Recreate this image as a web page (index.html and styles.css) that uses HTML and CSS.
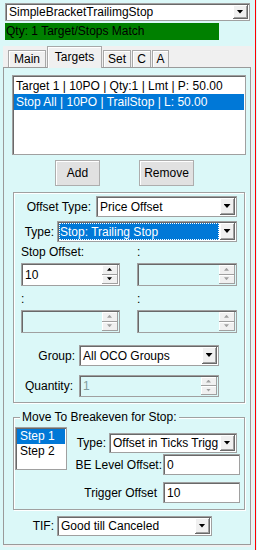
FILE: index.html
```html
<!DOCTYPE html>
<html lang="en">
<head>
  <meta charset="UTF-8">
  <title>Bracket Targets</title>
  <link rel="stylesheet" href="styles.css">
</head>
<body>
  <div class="form">
    <div class="combo top-combo"><span class="val">SimpleBracketTrailimgStop</span><span class="drop"></span></div>
    <div class="status">Qty: 1 Target/Stops Match</div>

    <div class="tabs">
      <div class="tab-strip">
        <span class="tab t-main">Main</span>
        <span class="tab t-targets active">Targets</span>
        <span class="tab t-set">Set</span>
        <span class="tab t-c">C</span>
        <span class="tab t-a">A</span>
      </div>

      <div class="page">
        <div class="listbox orders">
          <div class="item">Target 1 | 10PO | Qty:1 | Lmt | P: 50.00</div>
          <div class="item sel">Stop All | 10PO | TrailStop | L: 50.00</div>
        </div>

        <div class="btn-row">
          <button class="btn btn-add">Add</button>
          <button class="btn btn-remove">Remove</button>
        </div>

        <div class="group offsets">
          <div class="row r-otype">
            <span class="lbl">Offset Type:</span>
            <div class="combo"><span class="val">Price Offset</span><span class="drop"></span></div>
          </div>
          <div class="row r-type">
            <span class="lbl">Type:</span>
            <div class="combo"><span class="val"><span class="hl">Stop: Trailing Stop</span></span><span class="drop"></span></div>
          </div>

          <div class="grid">
            <div class="cell">
              <div class="cap">Stop Offset:</div>
              <div class="num"><span class="val">10</span><span class="spin"><i class="up"></i><i class="down"></i></span></div>
            </div>
            <div class="cell">
              <div class="cap">:</div>
              <div class="num off"><span class="val"></span><span class="spin"><i class="up"></i><i class="down"></i></span></div>
            </div>
            <div class="cell">
              <div class="cap">:</div>
              <div class="num off"><span class="val"></span><span class="spin"><i class="up"></i><i class="down"></i></span></div>
            </div>
            <div class="cell">
              <div class="cap">:</div>
              <div class="num off"><span class="val"></span><span class="spin"><i class="up"></i><i class="down"></i></span></div>
            </div>
          </div>

          <div class="row r-group">
            <span class="lbl">Group:</span>
            <div class="combo"><span class="val">All OCO Groups</span><span class="drop"></span></div>
          </div>
          <div class="row r-qty">
            <span class="lbl">Quantity:</span>
            <div class="num off"><span class="val">1</span><span class="spin"><i class="up"></i><i class="down"></i></span></div>
          </div>
        </div>

        <fieldset class="group be">
          <legend>Move To Breakeven for Stop:</legend>
          <div class="be-body">
            <div class="listbox steps">
              <div class="item sel">Step 1</div>
              <div class="item">Step 2</div>
            </div>
            <div class="be-fields">
              <div class="row r-betype">
                <span class="lbl">Type:</span>
                <div class="combo"><span class="val">Offset in Ticks Trigg</span><span class="drop"></span></div>
              </div>
              <div class="row r-belevel">
                <span class="lbl">BE Level Offset:</span>
                <div class="text">0</div>
              </div>
              <div class="row r-trigger">
                <span class="lbl">Trigger Offset</span>
                <div class="text">10</div>
              </div>
            </div>
          </div>
        </fieldset>

        <div class="row r-tif">
          <span class="lbl">TIF:</span>
          <div class="combo"><span class="val">Good till Canceled</span><span class="drop"></span></div>
        </div>
      </div>
    </div>
  </div>
</body>
</html>
```

FILE: styles.css
```css
* {
  margin: 0;
  padding: 0;
  box-sizing: border-box;
}
body {
  background: #dbf8f8;
  font-family: "Liberation Sans", Arial, sans-serif;
  font-size: 12px;
  color: #000;
}
.form {
  width: 256px;
  height: 550px;
  border-right: 1px solid #ff0000;
  padding-top: 3px;
}

/* combo box */
.combo {
  display: flex;
  height: 21px;
  background: #fff;
  border: 1px solid #a0a0a0;
  box-shadow: inset 1px 1px 0 #696969;
  padding: 1px;
}
.combo .val {
  flex: 1;
  display: flex;
  align-items: center;
  padding-left: 2px;
  white-space: nowrap;
  overflow: hidden;
}
.combo .drop {
  width: 15px;
  background: #f0f0f0;
  border-right: 1px solid #696969;
  border-bottom: 1px solid #696969;
  box-shadow: inset 1px 1px 0 #fff, inset -1px -1px 0 #a0a0a0;
  display: flex;
  align-items: center;
  justify-content: center;
}
.combo .drop::after {
  content: "";
  width: 7px;
  height: 4px;
  background: #000;
  clip-path: polygon(0 0, 100% 0, 50% 100%);
}
.top-combo {
  margin-left: 5px;
  width: 245px;
  height: 18px;
}
.hl {
  display: flex;
  align-items: center;
  width: 100%;
  height: 100%;
  background: #0078d7;
  color: #fff;
  padding-left: 1px;
  outline: 1px dotted #fff;
  outline-offset: -1px;
}
.combo .val:has(.hl) {
  padding-left: 0;
  padding-right: 1px;
}

.status {
  margin: 2px 0 0 5px;
  width: 214px;
  height: 17px;
  background: #008000;
  line-height: 17px;
  padding-left: 1px;
}

/* tab control */
.tabs {
  margin: 6px 0 0 3px;
  width: 250px;
  background: #f0f0f0;
  padding-bottom: 2px;
}
.tab-strip {
  display: flex;
  align-items: flex-end;
  height: 21px;
  padding-left: 5px;
}
.tab {
  height: 17px;
  line-height: 16px;
  text-align: center;
  background: #f0f0f0;
  border: 1px solid #a8a8a8;
  border-bottom: none;
  box-shadow: inset 1px 1px 0 #fff;
  margin-right: 1px;
}
.tab.active {
  height: 22px;
  line-height: 20px;
  margin-bottom: -1px;
  position: relative;
  z-index: 1;
}
.t-main { width: 38px; }
.t-targets { width: 55px; }
.t-set { width: 28px; }
.t-c { width: 19px; }
.t-a { width: 17px; }

.page {
  width: 248px;
  height: 478px;
  border: 1px solid #9a9a9a;
  background: #dbf8f8;
}

/* list boxes */
.listbox {
  background: #fff;
  border: 1px solid #a0a0a0;
  box-shadow: inset 1px 1px 0 #696969;
  padding: 2px 1px;
}
.listbox .item {
  height: 16px;
  line-height: 16px;
  padding-left: 2px;
  white-space: nowrap;
}
.listbox .item.sel {
  background: #0078d7;
  color: #fff;
}
.orders {
  margin: 7px 0 0 8px;
  width: 234px;
  height: 80px;
}

/* buttons */
.btn-row {
  display: flex;
  margin: 5px 0 0 51px;
  gap: 39px;
}
.btn {
  height: 26px;
  font: inherit;
  color: #000;
  background: #e1e1e1;
  border: 1px solid #adadad;
  box-shadow: inset 1px 1px 0 #fff;
}
.btn-add { width: 45px; }
.btn-remove { width: 55px; }

/* group boxes */
.group {
  margin-left: 9px;
  width: 232px;
  border: 1px solid #a0a0a0;
  box-shadow: inset 1px 1px 0 #fff, 1px 1px 0 #fff;
}
.offsets {
  margin-top: 6px;
  height: 211px;
}
.row {
  display: flex;
  align-items: center;
}
.row .lbl {
  text-align: right;
  white-space: nowrap;
}
.r-otype { margin-top: 3px; }
.r-otype .lbl { width: 77px; margin-right: 5px; }
.r-otype .combo { width: 141px; }
.r-type { margin-top: 4px; }
.r-type .lbl { width: 40px; margin-right: 3px; }
.r-type .combo { width: 180px; }

.grid {
  display: grid;
  grid-template-columns: 99px 100px;
  column-gap: 17px;
  row-gap: 6px;
  margin: 3px 0 0 7px;
}
.cap {
  line-height: 15px;
}

/* numeric up-down */
.num {
  display: flex;
  height: 23px;
  margin-top: 3px;
  background: #fff;
  border: 1px solid #a0a0a0;
  box-shadow: inset 1px 1px 0 #696969;
  padding: 1px;
}
.num .val {
  flex: 1;
  display: flex;
  align-items: center;
  padding-left: 2px;
}
.num.off {
  background: transparent;
  color: #7f9c9c;
}
.spin {
  width: 16px;
  display: flex;
  flex-direction: column;
}
.spin i {
  flex: 1;
  background: #f0f0f0;
  border-right: 1px solid #a0a0a0;
  border-bottom: 1px solid #a0a0a0;
  box-shadow: inset 1px 1px 0 #fff;
  display: flex;
  align-items: center;
  justify-content: center;
}
.spin i::after {
  content: "";
  width: 5px;
  height: 3px;
  background: #000;
}
.spin .up::after { clip-path: polygon(50% 0, 100% 100%, 0 100%); }
.spin .down::after { clip-path: polygon(0 0, 100% 0, 50% 100%); }
.num.off .spin i::after { background: #a0a0a0; }

.r-group { margin-top: 12px; }
.r-group .lbl { width: 61px; margin-right: 4px; }
.r-group .combo { width: 140px; }
.r-qty { margin-top: 9px; }
.r-qty .lbl { width: 59px; margin-right: 6px; }
.r-qty .num { width: 140px; height: 22px; margin-top: 0; }

/* breakeven */
.be {
  margin-top: 7px;
  padding: 0 0 6px 0;
}
.be legend {
  margin-left: 6px;
  padding: 0 2px;
  line-height: 15px;
  background: #dbf8f8;
}
.be-body {
  display: flex;
  align-items: flex-start;
}
.steps {
  margin: 2px 0 0 1px;
  width: 52px;
  height: 43px;
  padding: 1px;
}
.steps .item {
  height: 15px;
  line-height: 15px;
  padding-left: 3px;
}
.be-fields {
  margin: 8px 0 0 3px;
  width: 170px;
}
.r-betype .lbl { width: 36px; margin-right: 3px; }
.r-betype .combo { width: 128px; height: 20px; }
.r-belevel { margin-top: 1px; }
.r-belevel .lbl { width: 92px; margin-right: 1px; }
.r-trigger { margin-top: 7px; }
.r-trigger .lbl { width: 87px; margin-right: 6px; }
.text {
  width: 77px;
  height: 21px;
  background: #fff;
  border: 1px solid #a0a0a0;
  box-shadow: inset 1px 1px 0 #696969;
  padding-left: 3px;
  display: flex;
  align-items: center;
}

.r-tif { margin-top: 6px; }
.r-tif .lbl { width: 50px; margin-right: 3px; }
.r-tif .combo { width: 155px; height: 20px; }
```
